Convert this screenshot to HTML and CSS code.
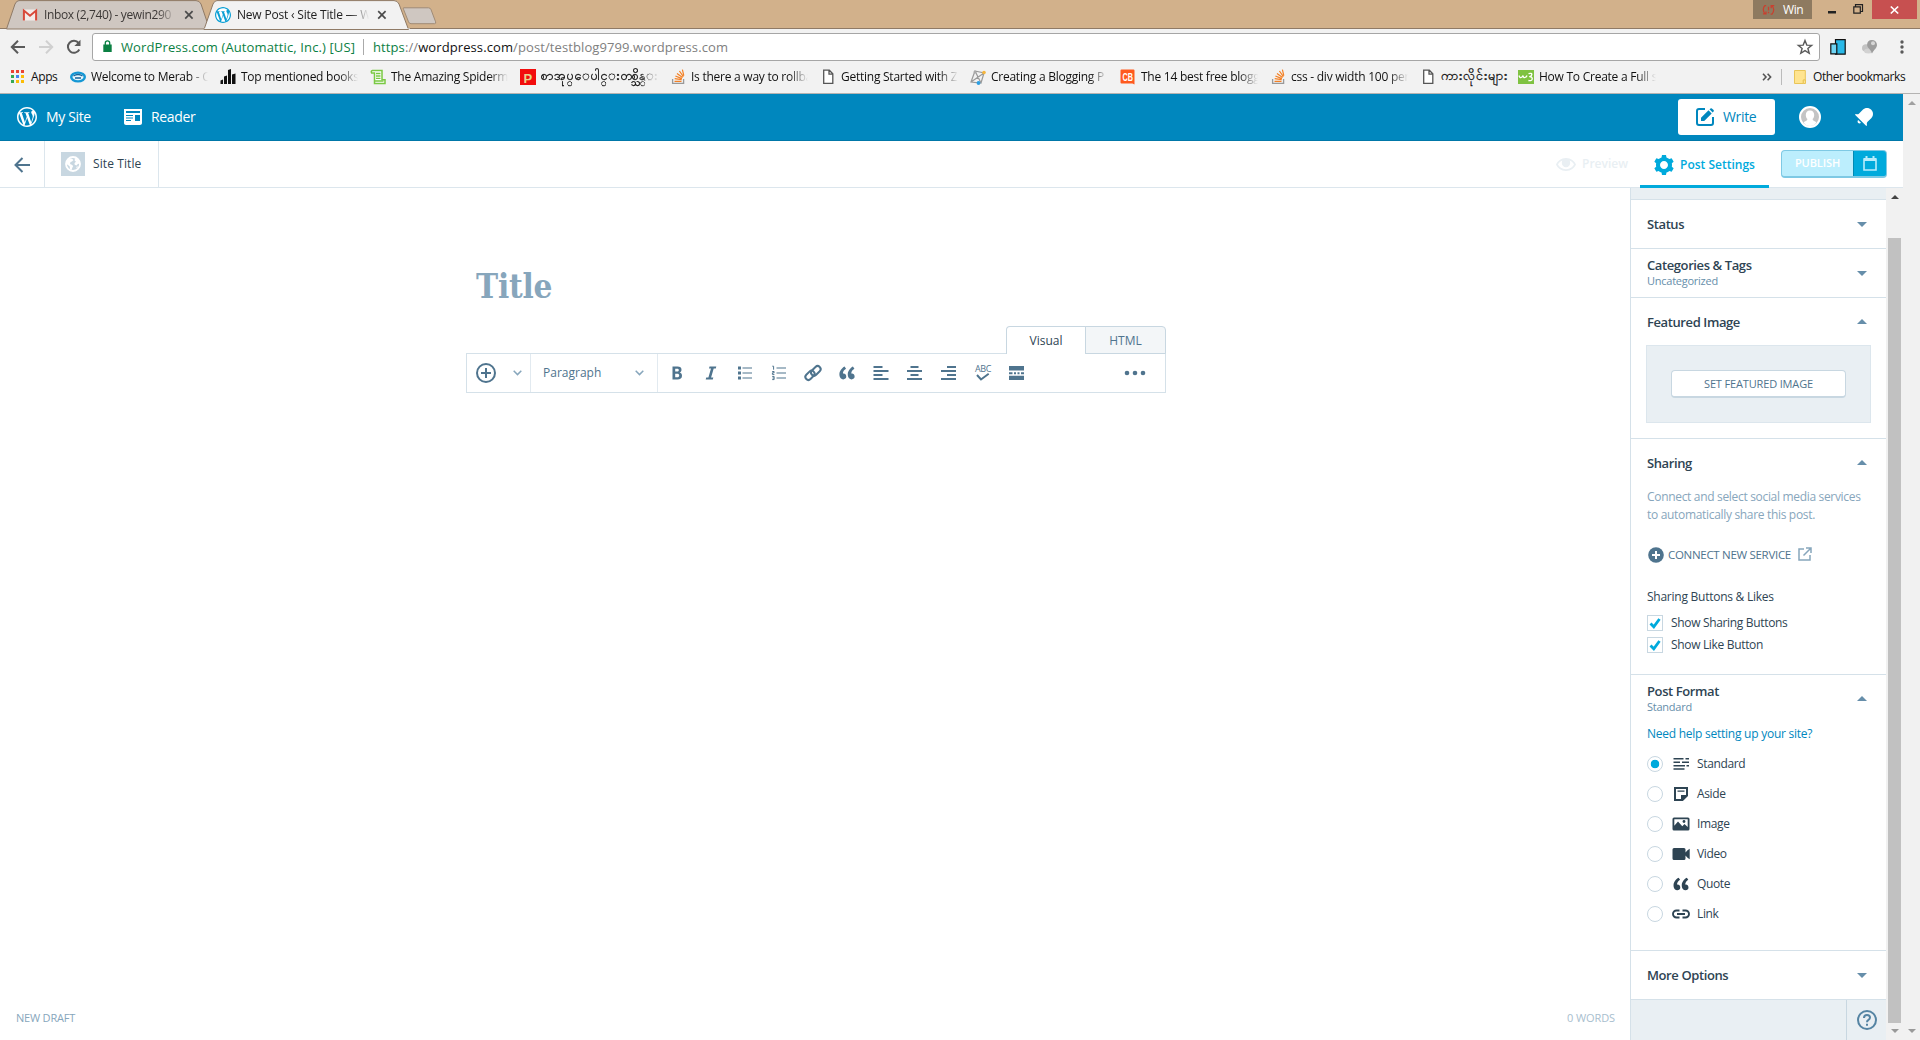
FILE: index.html
```html
<!DOCTYPE html>
<html lang="en">
<head>
<meta charset="utf-8">
<title>New Post ‹ Site Title — WordPress.com</title>
<link rel="stylesheet" href="styles.css">
</head>
<body>
<svg class="sprite" aria-hidden="true">
  <symbol id="wp" viewBox="2 2 20 20"><path d="M12 2C6.477 2 2 6.477 2 12s4.477 10 10 10 10-4.477 10-10S17.523 2 12 2zM3.5 12c0-1.232.264-2.402.736-3.46L8.29 19.65C5.456 18.272 3.5 15.365 3.5 12zm8.5 8.5c-.834 0-1.64-.12-2.4-.345l2.55-7.41 2.613 7.157c.017.042.038.08.06.117-.884.31-1.833.48-2.823.48zm1.172-12.485c.512-.027.973-.08.973-.08.458-.055.404-.728-.054-.702 0 0-1.376.108-2.265.108-.835 0-2.24-.107-2.24-.107-.458-.026-.51.674-.053.7 0 0 .434.055.892.082l1.324 3.63-1.86 5.578-3.096-9.208c.512-.027.973-.08.973-.08.458-.055.403-.728-.055-.702 0 0-1.376.108-2.265.108-.16 0-.347-.003-.547-.01C6.418 5.025 9.03 3.5 12 3.5c2.213 0 4.228.846 5.74 2.232-.037-.002-.072-.007-.11-.007-.835 0-1.427.727-1.427 1.51 0 .7.404 1.292.835 1.993.323.566.7 1.293.7 2.344 0 .727-.28 1.572-.646 2.748l-.848 2.833-3.072-9.138zm3.1 11.332l2.597-7.506c.484-1.212.645-2.18.645-3.044 0-.313-.02-.603-.057-.874.664 1.21 1.042 2.6 1.042 4.078 0 3.136-1.7 5.874-4.227 7.347z"/></symbol>
  <symbol id="quote" viewBox="0 0 24 24"><path id="q1" d="M11.192 15.757c0-.88-.23-1.618-.69-2.217-.326-.412-.768-.683-1.327-.812-.55-.128-1.07-.137-1.54-.028-.16-.95.1-1.956.76-3.022.66-1.065 1.515-1.867 2.558-2.403L9.373 5c-.8.396-1.56.898-2.26 1.505-.71.607-1.34 1.305-1.9 2.094s-.98 1.68-1.25 2.69-.346 2.04-.217 3.1c.168 1.4.62 2.52 1.356 3.35.735.84 1.652 1.26 2.748 1.26.965 0 1.766-.29 2.4-.878.628-.576.94-1.365.94-2.368z"/><use href="#q1" x="9.124"/></symbol>
  <symbol id="stack" viewBox="0 0 16 16"><path d="M2.6 10v4.4h11V10" fill="none" stroke="#999" stroke-width="1.3"/><path d="M4.5 12.3h7M4.7 9.7l7 1M5.4 7l6.5 2.6M7 4.4l5.6 4.2M9.4 2l4 5.6M12.4.6l1.4 6" fill="none" stroke="#f48024" stroke-width="1.2"/></symbol>
  <symbol id="page" viewBox="0 0 16 16"><path d="M3.7 1.2h5.6l3.5 3.5v9.6H3.7zM9 1.2v3.9h3.8" fill="#fff" stroke="#555" stroke-width="1.3"/></symbol>
  <symbol id="tabx" viewBox="0 0 10 10"><path d="M1.2 1.2l7.4 7.4M8.600 1.200l-7.400 7.400" stroke="#4b4b4b" stroke-width="1.7"/></symbol>
</svg>

<header class="browser">
  <div class="tabstrip">
    <div class="tab tab-idle">
      <svg class="tab-shape" viewBox="0 0 206 29"><path d="M.5 29 9 4Q10.500 .6 13 .6H190Q193.500.6 195 4L203.500 29z" fill="#cfc7c1" stroke="#8f7a66"/></svg>
      <svg class="fav" viewBox="0 0 16 16"><path d="M1 2.500h14v11H1z" fill="#f3ecea"/><path d="M1.900 13.500V3.600L8 8.800l6.100-5.200v9.900" fill="none" stroke="#d8493a" stroke-width="2"/></svg>
      <span class="tab-text">Inbox (2,740) - yewin290</span>
      <svg class="tabx"><use href="#tabx"/></svg>
    </div>
    <div class="tab tab-active">
      <svg class="tab-shape" viewBox="0 0 206 29"><path d="M0 29.500 9 4Q10.500.6 13 .6H190Q193.500.6 195 4L204.500 29.500z" fill="#f2f2f2" stroke="#8f7a66"/><path d="M0 28.500h206V29H0z" fill="#f2f2f2"/></svg>
      <svg class="fav wpblue"><use href="#wp"/></svg>
      <span class="tab-text">New Post ‹ Site Title — W</span>
      <svg class="tabx"><use href="#tabx"/></svg>
    </div>
    <svg class="newtab" viewBox="0 0 35 18"><path d="M1.500.8h25q2 0 2.600 2l4.500 12q.6 1.900-1 1.900H9q-1.800 0-2.500-1.900L1.600 2.500q-.6-1.700 0-1.700z" fill="#cfc7c1" stroke="#a08b75"/></svg>
    <div class="winbtns">
      <div class="profile"><svg viewBox="0 0 14 12"><path d="M4.500 1.200H3.200Q1.400 3 1.400 5.500q0 2.600 2 4.700M1 10.200h3.300V7.500M9.300 10.400h1.500q1.800-2 1.800-4.600T10.700 1.300M13.200 1.300H9.900V4M7 2.500v4M7 8v1.500" fill="none" stroke="#c9402f" stroke-width="1.400"/></svg>Win</div>
      <svg class="wmin" viewBox="0 0 8 3"><path d="M0 0h8v2.500H0z" fill="#222"/></svg>
      <svg class="wrest" viewBox="0 0 10 10"><path d="M.8 2.800h6.500v6.400H.8zM2.500 2.500V.6h7v6.900H7.500" fill="none" stroke="#222" stroke-width="1.200"/></svg>
      <div class="wclose"><svg viewBox="0 0 9 8"><path d="M.8.5l7.400 7M8.200.5l-7.400 7" stroke="#fff" stroke-width="1.700"/></svg></div>
    </div>
  </div>
  <div class="navbar">
    <svg class="nav-ico" viewBox="0 0 16 16"><path d="M15 8H2.500M8 1.800 1.800 8 8 14.200" fill="none" stroke="#5a5a5a" stroke-width="2"/></svg>
    <svg class="nav-ico fwd" viewBox="0 0 16 16"><path d="M1 8h12.500M8 1.800 14.200 8 8 14.200" fill="none" stroke="#d0d0d0" stroke-width="2"/></svg>
    <svg class="nav-ico rel" viewBox="0 0 16 16"><path d="M13.300 10.500A6 6 0 1 1 12.600 4" fill="none" stroke="#5a5a5a" stroke-width="2"/><path d="M14.500.8v6.200H8.400z" fill="#5a5a5a"/></svg>
    <div class="omnibox">
      <svg class="lock" viewBox="0 0 9 12"><path d="M.3 4.500h8.400V12H.3z" fill="#0b8043"/><path d="M2.300 5V3a2.200 2.200 0 0 1 4.400 0v2" fill="none" stroke="#0b8043" stroke-width="1.300"/></svg>
      <span class="ev">WordPress.com (Automattic, Inc.) [US]</span>
      <span class="url"><i>https</i>://<b>wordpress.com</b>/post/testblog9799.wordpress.com</span>
      <svg class="star" viewBox="0 0 16 16"><path d="M8 1.500l1.800 4.600 4.900.3-3.800 3.100 1.300 4.800L8 11.600l-4.200 2.700 1.300-4.800L1.300 6.400l4.900-.3z" fill="none" stroke="#5a5a5a" stroke-width="1.400"/></svg>
    </div>
    <svg class="ext1" viewBox="0 0 16 16"><path d="M5.500.6h9.700v14.600H5.500z" fill="#29b9e8" stroke="#111" stroke-width="1.200"/><path d="M.8 4.800h6v10H.8z" fill="#6fd4f3" stroke="#111" stroke-width="1.200"/></svg>
    <svg class="ext2" viewBox="0 0 16 16"><ellipse cx="4.500" cy="9" rx="4" ry="3.800" fill="#c3c3c3"/><ellipse cx="7" cy="12" rx="4.500" ry="2.500" fill="#d2d2d2"/><path d="M10.200 1a5 5 0 0 1 5.300 5c0 3-3 4.500-5 8.500C9 10 5.600 9 5.600 5.600 5.600 3 7.600 1 10.200 1z" fill="#9d9d9d"/><circle cx="11.500" cy="4.300" r="2" fill="#d6d6d6"/></svg>
    <svg class="kebab" viewBox="0 0 4 14"><g fill="#5a5a5a"><circle cx="2" cy="2" r="1.700"/><circle cx="2" cy="7" r="1.700"/><circle cx="2" cy="12" r="1.700"/></g></svg>
  </div>
  <div class="bookmarks">
    <svg class="apps" viewBox="0 0 13 13"><path d="M0 0h3v3H0zM5 0h3v3H5zM10 0h3v3h-3z" fill="#ea4335"/><path d="M0 5h3v3H0z" fill="#34a853"/><path d="M5 5h3v3H5z" fill="#4285f4"/><path d="M10 5h3v3h-3z" fill="#fbbc05"/><path d="M0 10h3v3H0z" fill="#34a853"/><path d="M5 10h3v3H5zM10 10h3v3h-3z" fill="#fbbc05"/></svg>
    <span class="apps-t">Apps</span>
    <div class="bm"><svg viewBox="0 0 16 16"><ellipse cx="8" cy="8" rx="8" ry="5.500" fill="#1597d4"/><ellipse cx="8" cy="8" rx="5.500" ry="3.200" fill="#e9f7fd"/><path d="M3.500 7q4.500-3 9 0M5 9h6" fill="none" stroke="#16639a" stroke-width="1.300"/></svg><span>Welcome to Merab - C</span></div>
    <div class="bm"><svg viewBox="0 0 16 16"><path d="M.5 11.500 3 10.500V15H.5zM4 7.500l3-1V15H4zM8 1l3-1v15H8zM12 5.500l3.500-1V15H12z" fill="#111"/></svg><span>Top mentioned books</span></div>
    <div class="bm"><svg viewBox="0 0 16 16"><path d="M2.500 1.500h9.500v9.300h3v3.600H4.500V4H1.600q-1-2 .9-2.500z" fill="#fff" stroke="#7ac943" stroke-width="1.500"/><path d="M6 4.500h4.500M6 7h4.500M6 9.400h4.500M4.500 12h9" stroke="#7ac943" stroke-width="1.300"/></svg><span>The Amazing Spiderm</span></div>
    <div class="bm"><svg viewBox="0 0 16 16"><path d="M0 0h16v16H0z" fill="#f20d0d"/><text x="3.500" y="13.500" class="ico-p">P</text></svg><span class="my">စာအုပ္ေပါင္းတစ္သိန္းေ</span></div>
    <div class="bm"><svg><use href="#stack"/></svg><span>Is there a way to rollba</span></div>
    <div class="bm"><svg><use href="#page"/></svg><span>Getting Started with Z</span></div>
    <div class="bm"><svg viewBox="0 0 16 16"><path d="M5 2 14 4 11 14 1 13zM5 2l6 12M14 4 1 13M5 2 1 13" fill="none" stroke="#9a9a9a" stroke-width="1.200"/><circle cx="14" cy="3.500" r="1.800" fill="#f5b53c"/><circle cx="8.500" cy="14" r="1.900" fill="#2d9fe3"/><circle cx="5" cy="3" r="1.500" fill="#aaa"/></svg><span>Creating a Blogging P</span></div>
    <div class="bm"><svg viewBox="0 0 16 16"><path d="M1.500.5h12q1 0 1 1v14l-2-1h-11q-1 0-1-1v-12q0-1 1-1z" fill="#ff5a1e"/><text x="2.400" y="11.500" class="ico-cb" textLength="10.500" lengthAdjust="spacingAndGlyphs">CB</text></svg><span>The 14 best free blogg</span></div>
    <div class="bm"><svg><use href="#stack"/></svg><span>css - div width 100 per</span></div>
    <div class="bm bm-short"><svg><use href="#page"/></svg><span class="my">ကားလိုင်းများ</span></div>
    <div class="bm"><svg viewBox="0 0 16 16"><path d="M0 1h16v14H0z" fill="#7fc241"/><path d="M1 6.500q.7 2.500 2.200 2T5 6.500q.4 2.500 2 2T9 6.500M10.500 4.700q3.600-1.200 3.300 1t-2.600 2q3.200-.2 3 2.200t-3.800 1.600" fill="none" stroke="#fff" stroke-width="1.300"/></svg><span>How To Create a Full s</span></div>
    <div class="bm-right">
      <svg class="raquo" viewBox="0 0 10 8"><path d="M1 .8 4 4 1 7.200M5.600.8l3 3.200-3 3.200" fill="none" stroke="#555" stroke-width="1.600"/></svg>
      <i class="vline"></i>
      <svg class="folder" viewBox="0 0 12 14"><path d="M.5.5h10.800v9.500h-2v3.500H.5z" fill="#ffe48f" stroke="#e9c558"/><path d="M9.300 10v3.500h2.200V10z" fill="#ffe48f" stroke="#e9c558"/></svg>
      <span>Other bookmarks</span>
    </div>
  </div>
</header>

<div class="page">
  <div class="site">
    <nav class="masterbar">
      <svg class="m-wp"><use href="#wp"/></svg><span class="m-site">My Site</span>
      <svg class="m-reader" viewBox="3 4 18 16"><path d="M3 4v14c0 1.100.9 2 2 2h14c1.100 0 2-.9 2-2V4H3zm7 12H5v-1h5v1zm2-2.500H5v-1h7v1zm0-2.500H5v-1h7v1zm7 5h-5v-6h5v6zm0-8H5V6h14v2z"/></svg><span class="m-read">Reader</span>
      <div class="write"><svg viewBox="0 0 18 18"><path d="M9 1H3Q1 1 1 3v12q0 2 2 2h12q2 0 2-2V9" fill="none" stroke="#0087be" stroke-width="2"/><path d="M5 13v-3.200l7.500-7.500 3.200 3.200L8.200 13zM13.500 1.300l1-.9q.7-.5 1.400 0L17.600 2q.6.700 0 1.400l-.9 1z" fill="#0087be"/></svg><span>Write</span></div>
      <svg class="avatar" viewBox="0 0 22 22"><circle cx="11" cy="11" r="10" fill="#c4c4c4" stroke="#fff" stroke-width="2"/><path d="M11 4.500c2.800 0 4.200 1.900 4.200 4.400 0 1.700-.8 3.300-1.700 4.200.3 2 2.600 2 3.900 3.400Q15 20 11 20t-6.400-3.500c1.300-1.400 3.600-1.400 3.900-3.400-.9-.9-1.700-2.500-1.700-4.200 0-2.500 1.400-4.400 4.200-4.400z" fill="#fff"/></svg>
      <svg class="bell" viewBox="3 3 18 18"><path d="M6.140 14.970l2.828 2.827c-.362.362-.862.586-1.414.586-1.105 0-2-.895-2-2 0-.552.224-1.052.586-1.414zm8.867 5.324L14.300 21 3 9.700l.706-.707 1.102.157c.754.108 1.690-.122 2.077-.510l3.885-3.884c2.340-2.340 6.135-2.340 8.475 0s2.340 6.135 0 8.475l-3.885 3.886c-.388.388-.618 1.323-.510 2.077l.157 1.100z"/></svg>
    </nav>

    <div class="ground">
      <div class="back"><svg viewBox="0 0 16 16"><path d="M16 8H2M8.500 1 1.500 8l7 7" fill="none" stroke="#4f748e" stroke-width="2"/></svg></div>
      <div class="sitebox"><div class="siteicon"><svg viewBox="0 0 16 16"><circle cx="8" cy="8" r="7" fill="none" stroke="#fff" stroke-width="1.800"/><path d="M1.500 5 4 2.500l3 .2L8.500 4 7 5.500 5.500 6 5 8l1.800.8L8.200 10l-.9 1.700L6.500 14 5 13.500l-.3-3L3 9 1.300 8zM10 2l3 1.500 1.800 4-2 .5-1.300 1.500-1.800-.7L9.500 7l1.500-1.200L9.600 4.500zM11 11l2-.8-.8 2z" fill="#fff"/></svg></div><span>Site Title</span></div>
      <div class="actions">
        <div class="preview"><svg viewBox="0 0 20 13"><path d="M10 0C5 0 1.500 3 0 6.500 1.500 10 5 13 10 13s8.500-3 10-6.500C18.500 3 15 0 10 0zm0 11.200C6 11.200 3.200 9 2 6.500c.8-1.700 2.200-3.200 4.400-4A4.500 4.500 0 0 0 5.800 5a4.200 4.200 0 0 0 8.400 0c0-.9-.2-1.700-.6-2.500 2.200.8 3.600 2.300 4.400 4-1.200 2.500-4 4.700-8 4.700z"/></svg><span>Preview</span></div>
        <div class="psettings"><svg viewBox="2 2 20 20"><path d="M20 12c0-.568-.06-1.122-.174-1.656l1.834-1.612-2-3.464-2.322.786c-.82-.736-1.787-1.308-2.860-1.657L14 2h-4l-.480 2.396c-1.070.35-2.040.92-2.858 1.657L4.340 5.268l-2 3.464 1.834 1.612C4.060 10.878 4 11.432 4 12s.06 1.122.174 1.656L2.340 15.268l2 3.464 2.322-.786c.82.736 1.787 1.308 2.860 1.657L10 22h4l.480-2.396c1.070-.35 2.038-.92 2.858-1.657l2.322.786 2-3.464-1.834-1.613c.113-.535.174-1.090.174-1.656zm-8 4c-2.210 0-4-1.790-4-4s1.790-4 4-4 4 1.790 4 4-1.790 4-4 4z"/></svg><span>Post Settings</span></div>
        <div class="pub"><span>PUBLISH</span><div><svg viewBox="0 0 14 15"><path d="M1 3h12v11H1z" fill="none" stroke="#b9ecfb" stroke-width="1.600"/><path d="M1 2h12v3H1zM2.500 0h2v3h-2zM9.500 0h2v3h-2z" fill="#b9ecfb"/></svg></div></div>
      </div>
    </div>

    <div class="work">
      <main class="editor">
        <div class="canvas">
          <h1>Title</h1>
          <div class="etabs"><div class="et on">Visual</div><div class="et off">HTML</div></div>
          <div class="tools">
            <div class="ins"><svg class="plus" viewBox="0 0 20 20"><circle cx="10" cy="10" r="9" fill="none" stroke="#4f748e" stroke-width="2"/><path d="M10 5v10M5 10h10" stroke="#4f748e" stroke-width="2"/></svg><svg class="chev" viewBox="0 0 9 6"><path d="M.7.8 4.500 4.600 8.300.8" fill="none" stroke="#87a6bc" stroke-width="1.500"/></svg></div>
            <div class="para"><span>Paragraph</span><svg class="chev" viewBox="0 0 9 6"><path d="M.7.8 4.500 4.600 8.300.8" fill="none" stroke="#87a6bc" stroke-width="1.500"/></svg></div>
            <div class="btns">
              <div><svg viewBox="0 0 20 20"><path fill-rule="evenodd" d="M5.500 3.500h5c2.600 0 4 1.200 4 3.200 0 1.400-.7 2.400-1.900 2.800 1.500.4 2.400 1.500 2.400 3.200 0 2.500-1.700 3.800-4.600 3.800H5.500zM8.200 5.700v2.900H10c1.200 0 1.800-.5 1.800-1.500S11.200 5.700 10 5.700zm0 5v3.600h2c1.300 0 2-.600 2-1.800s-.8-1.800-2-1.800z"/></svg></div>
              <div><svg viewBox="0 0 20 20"><path d="M8.500 3.500H15.300l-.5 2h-2.100l-2.600 9h2.200l-.5 2H4.700l.5-2h2.200l2.600-9H8z"/></svg></div>
              <div><svg viewBox="0 0 20 20"><path d="M3 3.500h3v3H3zM3 8.500h3v3H3zM3 13.500h3v3H3zM7.500 4.500h9.500v1H7.500zM7.500 9.500h9.500v1H7.500zM7.500 14.500h9.500v1H7.500z"/></svg></div>
              <div><svg viewBox="0 0 20 20"><path d="M7.500 4.500h9.500v1H7.500zM7.500 9.500h9.500v1H7.500zM7.500 14.500h9.500v1H7.500z"/><path d="M3.300 3.200h1.300v3.500M3.200 8.500h1.900v1.300H3.400v1.600h2M3.200 13.400h1.900V16.600H3.200M3.500 15h1.600" fill="none" stroke="#4f748e"/></svg></div>
              <div><svg viewBox="0 0 20 20"><g transform="rotate(-45 10 10)" fill="none" stroke="#4f748e" stroke-width="2"><rect x="1" y="6.500" width="10.500" height="6" rx="3"/><rect x="8" y="7.500" width="11" height="6" rx="3"/></g></svg></div>
              <div><svg class="q20"><use href="#quote"/></svg></div>
              <div><svg viewBox="0 0 20 20"><path d="M2.500 3h9v2h-9zM2.500 7h15v2h-15zM2.500 11h9v2h-9zM2.500 15h15v2h-15z"/></svg></div>
              <div><svg viewBox="0 0 20 20"><path d="M5.500 3h8v2h-8zM2 7h15v2H2zM5.500 11h8v2h-8zM2 15h15v2H2z"/></svg></div>
              <div><svg viewBox="0 0 20 20"><path d="M8 3h9v2H8zM2 7h15v2H2zM8 11h9v2H8zM2 15h15v2H2z"/></svg></div>
              <div class="abc"><span>ABC</span><svg viewBox="0 0 14 8"><path d="M1 2l4 4.500L12.700.8" fill="none" stroke="#4f748e" stroke-width="2"/></svg></div>
              <div><svg viewBox="0 0 20 20"><path d="M2 3h15v4.500H2zM2 12.700h15V17H2zM2 9.200h3.500v2H2zM7 9.200h2v2H7zM10.500 9.200h2v2h-2zM14 9.200h3v2h-3z"/></svg></div>
            </div>
            <svg class="dots" viewBox="0 0 22 6"><circle cx="3" cy="3" r="2.300"/><circle cx="11" cy="3" r="2.300"/><circle cx="19" cy="3" r="2.300"/></svg>
          </div>
        </div>
        <footer><span>NEW DRAFT</span><span class="words">0 WORDS</span></footer>
      </main>

      <aside class="side">
        <div class="topfill"></div>
        <section class="s-row"><h2>Status</h2><i class="down"></i></section>
        <section class="s-row"><div class="two"><h2>Categories &amp; Tags</h2><small>Uncategorized</small></div><i class="down"></i></section>
        <section class="s-feat"><div class="s-head"><h2>Featured Image</h2><i class="up"></i></div><div class="drop"><div class="fbtn">SET FEATURED IMAGE</div></div></section>
        <section class="s-share"><div class="s-head"><h2>Sharing</h2><i class="up"></i></div>
          <p class="hint"><span>Connect and select social media services</span><br><span>to automatically share this post.</span></p>
          <div class="connect"><svg class="cplus" viewBox="0 0 16 16"><circle cx="8" cy="8" r="7.800" fill="#4f748e"/><path d="M8 4v8M4 8h8" stroke="#fff" stroke-width="2"/></svg><span>CONNECT NEW SERVICE</span><svg class="ext" viewBox="0 0 14 14"><path d="M6 2H1v11h11V8M8 1h5v5M13 1 5.500 8.500" fill="none" stroke="#87a6bc" stroke-width="1.500"/></svg></div>
          <div class="sbl">Sharing Buttons &amp; Likes</div>
          <div class="check"><b><svg viewBox="0 0 12 11"><path d="M1.500 5.500l3.300 3.300L10.500 1" fill="none" stroke="#00aadc" stroke-width="2.800"/></svg></b><span>Show Sharing Buttons</span></div>
          <div class="check"><b><svg viewBox="0 0 12 11"><path d="M1.500 5.500l3.300 3.300L10.500 1" fill="none" stroke="#00aadc" stroke-width="2.800"/></svg></b><span>Show Like Button</span></div>
        </section>
        <section class="s-format"><div class="s-head"><div class="two"><h2>Post Format</h2><small>Standard</small></div><i class="up"></i></div>
          <a>Need help setting up your site?</a>
          <ul>
            <li><b class="on"></b><svg viewBox="0 0 18 18"><path d="M1.500 3h10v1.500h-10zM13.500 3H17v1.500h-3.500zM1.500 6.500H8V8H1.500zM10 6.500h7V8h-7zM1.500 10H13v1.500H1.500zM14.500 10H17v1.500h-2.500zM1.500 13.300h11v1.500h-11z"/></svg>Standard</li>
            <li><b></b><svg viewBox="0 0 18 18"><path d="M3 3h12v7.500L10.500 15H3z" fill="none" stroke="#2e4453" stroke-width="2"/><path d="M9 16V10h7l-6 6zM5.500 5.500h7v1.300h-7z"/></svg>Aside</li>
            <li><b></b><svg viewBox="0 0 18 18"><path fill-rule="evenodd" d="M2 2.500h14q1.500 0 1.500 1.500v10q0 1.500-1.500 1.500H2Q.5 15.500.5 14V4Q.5 2.500 2 2.500zM2.300 4.200V10.800L6 6.500l4.300 4.700L12.500 9l3.200 3V4.200z"/><circle cx="12" cy="6.500" r="1.400"/></svg>Image</li>
            <li><b></b><svg viewBox="0 0 18 18"><path d="M2 3h10q1.500 0 1.500 1.500V7.500l2-2.200L17.700 3.800v10.400L15.500 12.700l-2-2.200v3Q13.500 15 12 15H2Q.5 15 .5 13.500v-9Q.5 3 2 3z"/></svg>Video</li>
            <li><b></b><svg class="q18" viewBox="2 2 20 20"><use href="#quote" width="24" height="24"/></svg>Quote</li>
            <li><b></b><svg viewBox="0 0 18 18"><path d="M7.500 5.500h-3a3.500 3.500 0 0 0 0 7h3M10.500 5.500h3a3.500 3.500 0 0 1 0 7h-3M5 9h8" fill="none" stroke="#2e4453" stroke-width="1.900"/></svg>Link</li>
          </ul>
        </section>
        <section class="s-row"><h2>More Options</h2><i class="down"></i></section>
        <div class="s-foot"><div class="help"><svg viewBox="0 0 20 20"><circle cx="10" cy="10" r="9" fill="none" stroke="#5584a3" stroke-width="2"/><path d="M7 8q0-3 3-3t3 2.600q0 1.500-1.500 2.300T10 12.300M10 13.700v2" fill="none" stroke="#5584a3" stroke-width="2"/></svg></div></div>
      </aside>
      <div class="scroll"><i class="s-up"></i><div class="thumb"></div><i class="s-down"></i></div>
    </div>
  </div>
  <div class="outer"><i class="s-up grey"></i><i class="s-down"></i></div>
</div>
</body>
</html>
```
FILE: styles.css
```css
* { box-sizing: border-box; }
body { margin: 0; width: 1920px; height: 1040px; overflow: hidden; background: #fff; font-family: "Open Sans", "Noto Sans", sans-serif; font-size: 12px; color: #2e4453; line-height: 16px; }
svg { display: block; flex: none; overflow: visible; fill: currentColor; }
.sprite { position: absolute; width: 0; height: 0; }
span, h2, small, a { white-space: nowrap; }
i, b { font-style: normal; font-weight: 400; }

.browser { height: 94px; background: #f2f2f2; border-bottom: 1px solid #b4b3b2; color: #111; }
.tabstrip { display: flex; height: 29px; background: #d2b18b; border-bottom: 1px solid #8f7a66; padding-left: 6px; }
.tab { position: relative; flex: none; display: flex; align-items: center; width: 206px; height: 29px; padding-left: 16px; color: #3c3836; }
.tab-active { margin-left: -8px; z-index: 2; padding-left: 10px; color: #222; width: 206px; }
.tab-shape { position: absolute; left: 0; top: 0; width: 206px; height: 29px; z-index: -1; }
.tab-idle { z-index: 1; }
.fav { width: 16px; height: 16px; }
.wpblue { color: #0b9fd4; background: #fff; border-radius: 50%; margin-left: 1px; }
.tab-text { width: 132px; overflow: hidden; margin-left: 6px; letter-spacing: -.35px; -webkit-mask-image: linear-gradient(90deg, #000 86%, transparent); }
.tabx { width: 10px; height: 10px; margin-left: 8px; }
.tab-active .tab-text { letter-spacing: -.2px; }
.newtab { width: 35px; height: 18px; margin: 7px 0 0 -8px; }
.winbtns { margin-left: auto; display: flex; padding-right: 3px; }
.profile { display: flex; align-items: center; gap: 8px; width: 59px; height: 19px; background: #8e7a60; color: #fff; padding-left: 9px; letter-spacing: -.4px; }
.profile svg { width: 13px; height: 12px; }
.wmin { width: 8px; height: 3px; margin: 11px 17px 0 16px; }
.wrest { width: 10px; height: 10px; margin: 4px 9px 0 0; }
.wclose { width: 45px; height: 19px; background: #c75050; display: flex; align-items: center; justify-content: center; }
.wclose svg { width: 9px; height: 8px; }

.navbar { display: flex; align-items: center; height: 35px; padding: 0 16px 0 10px; font-size: 13px; }
.nav-ico { width: 16px; height: 16px; margin-right: 12px; }
.rel { margin-right: 10px; }
.omnibox { display: flex; align-items: center; width: 1728px; height: 28px; background: #fff; border: 1px solid #a6a6a6; border-radius: 3px; padding: 0 6px 0 10px; }
.lock { width: 9px; height: 12px; margin-top: -2px; }
.ev { color: #0b8043; width: 243px; margin-left: 9px; border-right: 1px solid #aaa; letter-spacing: .12px; }
.url { margin-left: 9px; color: #808080; letter-spacing: .1px; }
.url i { color: #0b8043; }
.url b { color: #111; }
.star { width: 16px; height: 16px; margin-left: auto; }
.ext1 { width: 16px; height: 16px; margin-left: 10px; }
.ext2 { width: 17px; height: 16px; margin-left: 15px; }
.kebab { width: 4px; height: 14px; margin-left: auto; }

.bookmarks { display: flex; align-items: center; height: 27px; padding-left: 11px; margin-top: -1px; }
.apps { width: 13px; height: 13px; }
.apps-t { margin-left: 7px; width: 39px; letter-spacing: -.4px; }
.bm { display: flex; align-items: center; flex: none; width: 150px; height: 27px; }
.bm svg { width: 16px; height: 16px; }
.bm span { width: 117px; margin-left: 5px; overflow: hidden; letter-spacing: -.25px; -webkit-mask-image: linear-gradient(90deg, #000 84%, transparent); }
.bm .my { height: 27px; line-height: 26px; letter-spacing: 0; font-size: 12.6px; -webkit-text-stroke: .3px #111; }
.bm-short { width: 98px; }
.bm-short .my { width: 70px; -webkit-mask-image: none; }
.ico-p { font: bold 13px "Liberation Sans", sans-serif; fill: #e8d48c; }
.ico-cb { font: bold 10px "Liberation Sans", sans-serif; fill: #fff; }
.bm-right { margin-left: auto; display: flex; align-items: center; width: 158px; letter-spacing: -.42px; }
.raquo { width: 10px; height: 8px; }
.vline { width: 1px; height: 16px; background: #bbb; margin: 0 12px 0 9px; }
.folder { width: 12px; height: 14px; margin-right: 7px; }

.page { display: flex; height: 946px; }
.site { width: 1903px; }
.outer, .scroll { width: 17px; background: #f1f1f1; display: flex; flex-direction: column; align-items: center; }
.masterbar { display: flex; align-items: center; height: 47px; background: #0087be; border-bottom: 1px solid #0077a8; color: #fff; padding: 0 30px 0 17px; font-size: 14px; letter-spacing: -.35px; }
.m-wp { width: 20px; height: 20px; }
.m-site { margin-left: 9px; width: 78px; }
.m-reader { width: 18px; height: 16px; }
.m-read { margin-left: 9px; }
.write { margin-left: auto; display: flex; align-items: center; width: 97px; height: 36px; background: #fff; border-radius: 3px; color: #0087be; padding-left: 18px; gap: 9px; }
.write svg { width: 18px; height: 18px; }
.avatar { width: 22px; height: 22px; margin: 0 34px 0 24px; }
.bell { width: 18px; height: 18px; }

.ground { display: flex; height: 47px; border-bottom: 1px solid #dce6ed; }
.back { width: 45px; border-right: 1px solid #dce6ed; padding: 16px 0 0 14px; }
.back svg { width: 16px; height: 16px; }
.sitebox { display: flex; align-items: center; width: 114px; border-right: 1px solid #dce6ed; padding-left: 16px; gap: 8px; letter-spacing: .1px; }
.siteicon { width: 24px; height: 24px; background: #c8d7e1; padding: 4px; flex: none; }
.siteicon svg { width: 16px; height: 16px; }
.actions { margin-left: auto; display: flex; padding-right: 16px; font-weight: 600; }
.preview { display: flex; align-items: center; gap: 6px; color: #e9eff3; width: 84px; }
.preview svg { width: 20px; height: 13px; }
.psettings { display: flex; align-items: center; gap: 6px; width: 129px; height: 47px; padding: 3px 0 0 14px; color: #00aadc; border-bottom: 3px solid #00aadc; letter-spacing: 0; }
.psettings svg { width: 20px; height: 20px; }
.pub { display: flex; width: 106px; height: 28px; margin: 9px 0 0 12px; border: 1px solid #7ec9e4; border-bottom-width: 2px; border-radius: 4px; background: #bceefd; overflow: hidden; color: #fff; }
.pub span { width: 71px; text-align: center; line-height: 24px; font-size: 11px; letter-spacing: -.1px; }
.pub div { width: 34px; margin: -1px -1px -2px 0; flex: none; background: #00aadc; border: 1px solid #008ab3; border-bottom-width: 2px; border-radius: 0 4px 4px 0; padding: 5px 0 0 9px; }
.pub svg { width: 14px; height: 15px; }

.work { display: flex; height: 852px; }
.editor { width: 1630px; display: flex; flex-direction: column; }
.canvas { width: 700px; margin-left: 466px; padding-top: 75px; flex: 1; }
h1 { margin: 0 0 17px 10px; height: 46px; font: bold 33px/48px "DejaVu Serif Condensed", "DejaVu Serif", serif; font-stretch: condensed; letter-spacing: -.2px; color: #87a6bc; }
.etabs { display: flex; justify-content: flex-end; height: 28px; position: relative; z-index: 1; margin-bottom: -1px; color: #2e4453; }
.et { text-align: center; line-height: 27px; border: 1px solid #c8d7e1; }
.on.et { width: 80px; background: #fff; border-bottom: 0; border-radius: 4px 0 0 0; }
.off.et { width: 81px; margin-left: -1px; background: #f3f6f8; color: #4f748e; border-radius: 0 4px 0 0; }
.tools { display: flex; height: 40px; border: 1px solid #d5e1e9; color: #4f748e; }
.ins { display: flex; align-items: center; width: 64px; border-right: 1px solid #e2eaf0; padding-left: 9px; }
.plus { width: 20px; height: 20px; margin-right: 17px; }
.chev { width: 9px; height: 6px; }
.para { display: flex; align-items: center; width: 127px; border-right: 1px solid #e2eaf0; padding: 0 13px 0 12px; justify-content: space-between; }
.btns { display: flex; margin-left: 2px; }
.btns div { width: 34px; display: flex; align-items: center; justify-content: center; }
.btns svg { width: 20px; height: 20px; }
.btns .q20 { width: 22px; height: 22px; }
.btns .abc { flex-direction: column; }
.abc span { font-size: 9px; line-height: 8px; letter-spacing: -.4px; font-weight: 500; }
.btns .abc svg { width: 14px; height: 8px; }
.dots { width: 22px; height: 6px; margin: 16px 19px 0 auto; }
footer { display: flex; justify-content: space-between; padding: 0 15px 14px 16px; color: #87a6bc; font-size: 11px; letter-spacing: -.2px; }
.words { color: #a8bece; letter-spacing: -.1px; }

.side { width: 256px; border-left: 1px solid #d5e1e9; display: flex; flex-direction: column; }
.side > section, .topfill { border-bottom: 1px solid #d5e1e9; padding: 0 19px 0 16px; }
.topfill { height: 12px; background: #e9eff3; flex: none; }
h2 { margin: 0; font-size: 13px; line-height: 17px; font-weight: 600; letter-spacing: -.4px; }
small { display: block; font-size: 11px; line-height: 14px; color: #668eaa; letter-spacing: -.25px; }
.two { padding-bottom: 2px; }
.side i { width: 0; height: 0; border: 5px solid transparent; flex: none; }
.side i.down { border-top-color: #668eaa; border-bottom: 0; }
.side i.up { border-bottom-color: #668eaa; border-top: 0; margin-top: -2px; }
.side > .s-row, .s-head { display: flex; align-items: center; justify-content: space-between; height: 49px; flex: none; }
.s-head { height: 48px; }
.s-feat { height: 141px; }
.drop { width: 225px; height: 78px; margin: -1px 0 0 -1px; background: #e9eff3; border: 1px solid #dce6ed; padding: 24px; }
.fbtn { width: 175px; height: 28px; background: #fff; border: 1px solid #c8d7e1; border-bottom-width: 2px; border-radius: 4px; color: #4f748e; text-align: center; font-size: 11px; line-height: 26px; letter-spacing: -.15px; font-weight: 500; }
.s-share { height: 236px; }
.hint { margin: 1px 0 0; line-height: 18px; color: #87a6bc; letter-spacing: -.32px; }
.connect { display: flex; align-items: center; height: 20px; margin: 21px 0 0 1px; color: #4f748e; font-size: 11.5px; letter-spacing: -.3px; font-weight: 500; }
.cplus { width: 16px; height: 16px; margin-right: 4px; }
.ext { width: 14px; height: 14px; margin: -2px 0 0 7px; }
.sbl { margin: 24px 0 10px; letter-spacing: -.25px; }
.check { display: flex; align-items: center; height: 16px; margin-bottom: 6px; gap: 8px; letter-spacing: -.33px; }
.check b { width: 16px; height: 16px; border: 1px solid #c8d7e1; padding: 2px 1px; }
.check svg { width: 12px; height: 11px; }
.s-format { height: 276px; }
.s-format a { display: block; margin-top: 3px; color: #0087be; letter-spacing: -.25px; }
ul { list-style: none; margin: 7px 0 0; padding: 0; }
li { display: flex; align-items: center; height: 30px; letter-spacing: -.35px; }
li b { width: 16px; height: 16px; border: 1px solid #c8d7e1; border-radius: 50%; margin-right: 9px; }
li b.on { background: radial-gradient(circle, #00aadc 4px, #fff 4.600px); }
li svg { width: 18px; height: 18px; margin-right: 7px; }
.s-foot { flex: 1; background: #e9eff3; display: flex; justify-content: flex-end; }
.help { width: 40px; border-left: 1px solid #c8d7e1; padding: 10px 0 0 10px; }
.help svg { width: 20px; height: 20px; }
.s-up, .s-down { border: 4px solid transparent; width: 0; height: 0; }
.s-up { border-bottom-color: #444; border-top: 0; margin-top: 7px; }
.s-up.grey { border-bottom-color: #a0a0a0; }
.s-down { border-top-color: #999; border-bottom: 0; margin: auto 0 7px; }
.thumb { width: 13px; height: 785px; background: #c1c1c1; margin-top: 39px; }
```
